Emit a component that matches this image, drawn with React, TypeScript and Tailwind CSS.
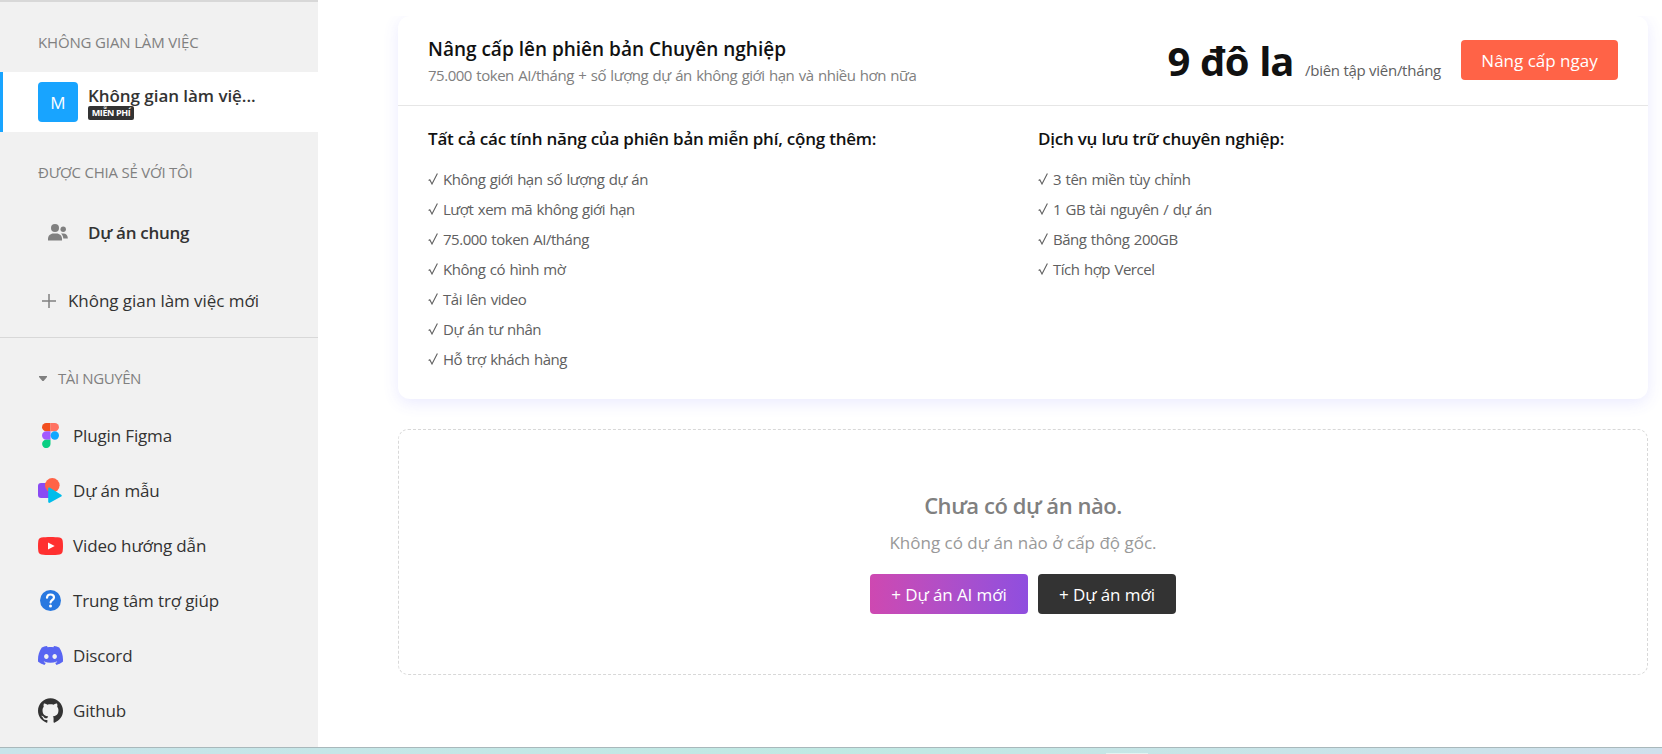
import type { ReactNode } from 'react'
import { SiDiscord, SiGithub } from 'react-icons/si'

const FREE_FEATURES = [
  'Không giới hạn số lượng dự án',
  'Lượt xem mã không giới hạn',
  '75.000 token AI/tháng',
  'Không có hình mờ',
  'Tải lên video',
  'Dự án tư nhân',
  'Hỗ trợ khách hàng',
]

const HOSTING_FEATURES = [
  '3 tên miền tùy chỉnh',
  '1 GB tài nguyên / dự án',
  'Băng thông 200GB',
  'Tích hợp Vercel',
]

function FigmaIcon() {
  return (
    <svg width="17" height="25" viewBox="0 0 17 25">
      <path d="M4.2 0h4.3v8.3H4.2a4.15 4.15 0 0 1 0-8.3z" fill="#f24e1e" />
      <path d="M8.5 0h4.3a4.15 4.15 0 0 1 0 8.3H8.5z" fill="#ff7262" />
      <path d="M4.2 8.3h4.3v8.4H4.2a4.2 4.2 0 0 1 0-8.4z" fill="#a259ff" />
      <circle cx="12.8" cy="12.5" r="4.2" fill="#12a7ff" />
      <path d="M4.2 16.7h4.3v4.1a4.2 4.2 0 1 1-4.3-4.1z" fill="#0acf83" />
    </svg>
  )
}

function SamplesIcon() {
  return (
    <svg width="25" height="25" viewBox="0 0 25 25">
      <rect x="0" y="5" width="15" height="15" rx="3" fill="#8a4af3" />
      <circle cx="14.3" cy="7.3" r="7.3" fill="#ff6347" />
      <path d="M10.2 10.6v13.2c0 1 .9 1.4 1.7 1l11.3-6.2c.8-.5.8-1.4 0-1.9L11.900 9.700c-.8-.5-1.7 0-1.700.9z" fill="#00bdeb" />
    </svg>
  )
}

function VideoIcon() {
  return (
    <svg width="25" height="18" viewBox="0 0 25 18">
      <path d="M3.4.6C6 .2 9 0 12.5 0s6.5.2 9.1.6c2.1.3 2.9 1.6 3.1 3.4.4 3.3.4 6.7 0 10-.2 1.8-1 3.1-3.1 3.4-2.6.4-5.6.6-9.1.6s-6.500-.2-9.100-.6C1.300 17.100.5 15.800.3 14c-.4-3.300-.4-6.700 0-10C.5 2.200 1.300.9 3.400.6z" fill="#ff3030" />
      <path d="M10 5.4v7.2L16.700 9z" fill="#fff" />
    </svg>
  )
}

function HelpIcon() {
  return (
    <svg width="21" height="21" viewBox="0 0 21 21" fill="none">
      <circle cx="10.5" cy="10.5" r="10.5" fill="#2878e0" />
      <path d="M7 7.7c.1-2 1.5-3.200 3.500-3.200s3.500 1.200 3.500 3c0 2.500-3.400 2.500-3.400 5" stroke="#fff" strokeWidth="2.2" strokeLinecap="round" />
      <circle cx="10.5" cy="16" r="1.5" fill="#fff" />
    </svg>
  )
}

function PeopleIcon() {
  return (
    <svg width="20" height="17" viewBox="0 0 20 17" fill="#808080">
      <circle cx="7" cy="4" r="4" />
      <path d="M0 16.500v-1.500c0-3.200 2.300-5.500 5.500-5.500h3c3.200 0 5.500 2.300 5.500 5.500v1.500z" />
      <circle cx="15.200" cy="5.300" r="2.700" />
      <path d="M13 9.500h2.300c2.700 0 4.500 1.900 4.500 4.500v.5h-4.500c-.1-2-.9-3.700-2.300-5z" />
    </svg>
  )
}

type Resource = { label: string; icon: ReactNode }

const RESOURCES: Resource[] = [
  { label: 'Plugin Figma', icon: <FigmaIcon /> },
  { label: 'Dự án mẫu', icon: <SamplesIcon /> },
  { label: 'Video hướng dẫn', icon: <VideoIcon /> },
  { label: 'Trung tâm trợ giúp', icon: <HelpIcon /> },
  { label: 'Discord', icon: <SiDiscord size={25} color="#5865f2" /> },
  { label: 'Github', icon: <SiGithub size={25} color="#333" /> },
]

function FeatureList({ title, items }: { title: string; items: string[] }) {
  return (
    <div className="flex-1">
      <h3 className="text-[17px] leading-6 font-semibold tracking-[-0.22px] text-[#111]">{title}</h3>
      <ul className="mt-[13px] text-[15px] leading-[30px] tracking-[-0.48px] text-[#606060] [word-spacing:1px]">
        {items.map((item) => (
          <li key={item} className="flex items-center">
            <svg className="mr-[5px]" width="10" height="12" viewBox="0 0 10 12" fill="none">
              <path d="M.6 7.4 1.8 6.7 4 11 9.4.6" stroke="#606060" strokeWidth="1.1" />
            </svg>
            {item}
          </li>
        ))}
      </ul>
    </div>
  )
}

function Sidebar() {
  return (
    <aside className="w-[318px] shrink-0 border-t-2 border-[#d8d8d8] bg-[#f1f1f1] text-[17px] text-[#333]">
      <h2 className="mt-[30px] pl-[38px] text-[15px] leading-5 tracking-[-0.15px] text-[#808080]">
        KHÔNG GIAN LÀM VIỆC
      </h2>
      <div className="mt-5 flex h-[60px] items-center border-l-[3px] border-[#18a4ff] bg-white pl-[35px]">
        <div className="flex size-10 items-center justify-center rounded bg-[#18a4ff] pt-px text-[17px] font-medium text-white">
          M
        </div>
        <div className="ml-2.5">
          <p className="pt-px leading-[21px] font-semibold tracking-[-0.05px]">Không gian làm việ...</p>
          <span className="flex h-[14px] w-[46px] items-center justify-center rounded-[2px] bg-[#333] text-[9px] font-bold tracking-[-0.4px] text-white">
            MIỄN PHÍ
          </span>
        </div>
      </div>

      <h2 className="mt-[30px] pl-[38px] text-[15px] leading-5 tracking-[-0.22px] text-[#808080]">
        ĐƯỢC CHIA SẺ VỚI TÔI
      </h2>
      <div className="mt-5 flex h-[60px] items-center pl-[38px]">
        <span className="flex size-10 items-center justify-center">
          <PeopleIcon />
        </span>
        <span className="ml-2.5 pt-px font-semibold tracking-[-0.3px]">Dự án chung</span>
      </div>
      <div className="mt-[9px] flex h-[60px] items-center pl-[42px] tracking-[-0.05px]">
        <svg width="14" height="14" viewBox="0 0 14 14">
          <path d="M7 0v14M0 7h14" stroke="#808080" strokeWidth="1.5" />
        </svg>
        <span className="ml-3">Không gian làm việc mới</span>
      </div>

      <div className="mt-1.5 border-t border-[#d8d8d8] pt-[30px]">
        <h2 className="flex items-center pl-[39px] text-[15px] leading-5 tracking-[-0.4px] text-[#808080]">
          <svg className="mr-[11px]" width="8" height="5" viewBox="0 0 8 5">
            <path d="M0 0h8v1L4.600 5H3.400L0 1z" fill="#808080" />
          </svg>
          TÀI NGUYÊN
        </h2>
        <ul className="mt-5">
          {RESOURCES.map((r) => (
            <li key={r.label} className="flex h-[55px] items-center pl-[38px] tracking-[-0.15px]">
              <span className="mr-2.5 flex w-[25px] justify-center">{r.icon}</span>
              {r.label}
            </li>
          ))}
        </ul>
      </div>
    </aside>
  )
}

export default function App() {
  return (
    <div className="flex h-[754px] flex-col overflow-hidden bg-white font-['Open_Sans','Segoe_UI',sans-serif]">
      <div className="flex h-[747px]">
        <Sidebar />
        <main className="mt-4 min-w-0 flex-1 overflow-hidden pr-3.5 pl-20">
          {/* Bảng nâng cấp */}
          <section className="h-[383px] rounded-xl shadow-[0_4px_16px_rgba(80,80,255,0.12)]">
            <div className="flex h-[90px] items-start justify-between border-b border-[#e6e6e6] px-[30px]">
              <div className="pt-5">
                <h1 className="text-[19px] leading-[26px] font-semibold text-[#111]">
                  Nâng cấp lên phiên bản Chuyên nghiệp
                </h1>
                <p className="text-[15px] leading-[26px] tracking-[-0.48px] text-[#808080] [word-spacing:1px]">
                  75.000 token AI/tháng + số lượng dự án không giới hạn và nhiều hơn nữa
                </p>
              </div>
              <div className="flex items-start">
                <p className="mt-[18px] mr-5 flex items-baseline text-[#111]">
                  <span className="text-[40px] leading-[54px] font-bold tracking-[-1.3px] [word-spacing:2px]">
                    9 đô la
                  </span>
                  <span className="ml-3 text-[15px] tracking-[-0.27px] text-[#606060]">/biên tập viên/tháng</span>
                </p>
                <button className="mt-6 h-10 w-[157px] rounded bg-[#ff6347] pt-0.5 text-[17px] text-white">
                  Nâng cấp ngay
                </button>
              </div>
            </div>
            <div className="flex pt-[21px] pl-[30px]">
              <FeatureList title="Tất cả các tính năng của phiên bản miễn phí, cộng thêm:" items={FREE_FEATURES} />
              <FeatureList title="Dịch vụ lưu trữ chuyên nghiệp:" items={HOSTING_FEATURES} />
            </div>
          </section>

          {/* Chưa có dự án */}
          <section className="mt-[30px] flex h-[246px] flex-col items-center rounded-[10px] border border-dashed border-[#d8d8d8] pt-[59px]">
            <h2 className="text-[22px] leading-8 font-semibold tracking-[-0.45px] text-[#808080]">
              Chưa có dự án nào.
            </h2>
            <p className="mt-2 text-[17px] leading-7 text-[#999]">Không có dự án nào ở cấp độ gốc.</p>
            <div className="mt-[17px] flex gap-2.5 text-[17px] tracking-[-0.1px] text-white">
              <button className="h-10 w-[158px] rounded bg-linear-to-r from-[#ce48b1] to-[#8f4edf] pt-0.5">
                + Dự án AI mới
              </button>
              <button className="h-10 w-[138px] rounded bg-[#333] pt-0.5">+ Dự án mới</button>
            </div>
          </section>
        </main>
      </div>

      <footer className="flex h-[7px] items-end border-t border-[#a9b8bb] bg-linear-to-r from-[#c8e4ea] via-[#c0e9e3] to-[#cfe0ec] pl-[1106px]">
        <span className="h-px w-[42px] bg-[#e3f3f2]" />
      </footer>
    </div>
  )
}
